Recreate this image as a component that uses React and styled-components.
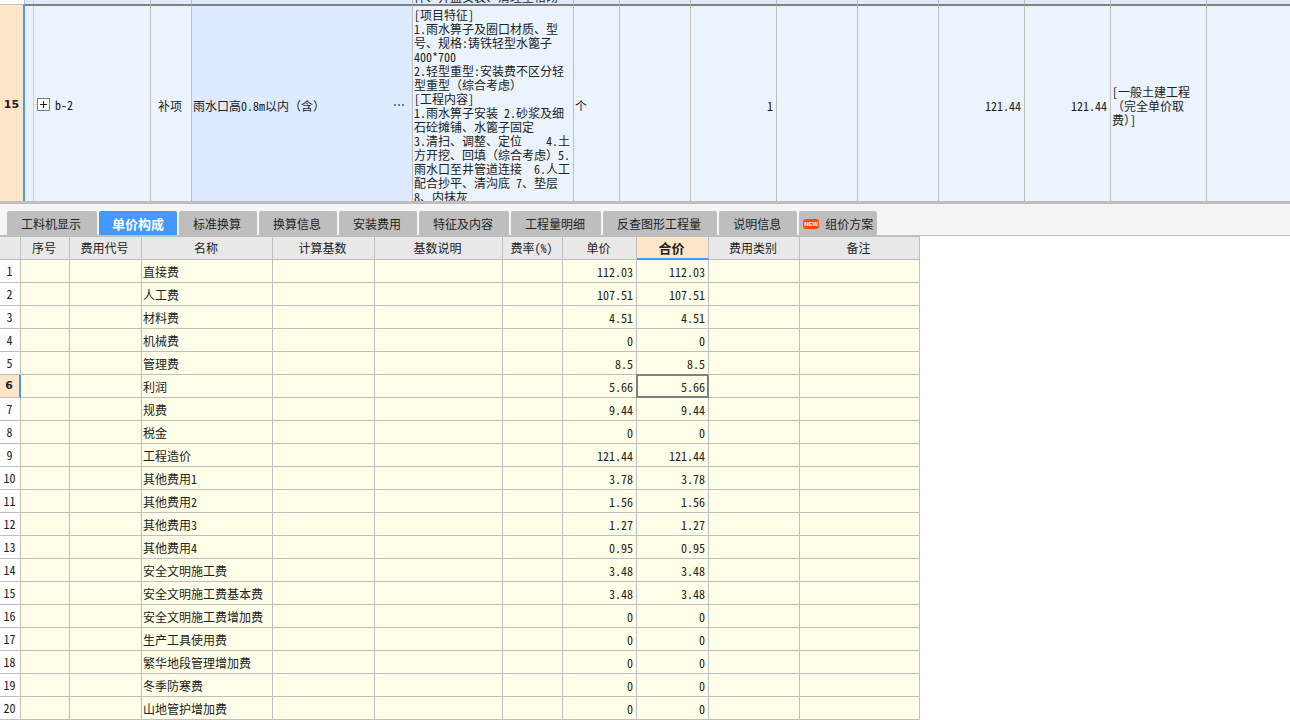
import React from 'react';
import styled, { createGlobalStyle } from 'styled-components';

const GlobalStyle = createGlobalStyle`
  * {
    box-sizing: border-box;
  }

  body {
    margin: 0;
    background: #fff;
    color: #222;
    font-family: "Noto Sans CJK SC", "Liberation Sans", sans-serif;
    font-size: 12px;
    line-height: 14px;
    font-feature-settings: "hwid" 1;
  }
`;

const Page = styled.main`
  display: flex;
  flex-direction: column;
  min-height: 100vh;
`;

const UpperPane = styled.section`
  overflow: hidden;
  border-bottom: 3px solid #bebebe;
`;

const Grid = styled.table`
  border-collapse: separate;
  border-spacing: 0;
  table-layout: fixed;
  width: ${(p) => p.$width || '100%'};
`;

const ItemCell = styled.td`
  height: ${(p) => (p.$peek ? 4 : 197)}px;
  padding: 0;
  border-right: 1px solid #bebebe;
  border-top: ${(p) => (p.$peek ? 'none' : '2px solid #808080')};
  background: ${(p) => (p.$focus || p.$peek ? '#ddeaff' : '#ebf3fd')};
  text-align: ${(p) => p.$align || 'left'};
  vertical-align: middle;

  &:last-child {
    border-right: none;
  }
`;

const ItemNumber = styled.th`
  padding: ${(p) => (p.$peek ? 0 : 4)}px 0 0;
  border-right: ${(p) => (p.$peek ? '1px solid #bebebe' : '2px solid #4499ff')};
  border-top: ${(p) => (p.$peek ? 'none' : '1px solid #bebebe')};
  background: ${(p) => (p.$peek ? '#fff' : '#ffe6c8')};
  font-weight: bold;
  font-family: "DejaVu Sans", sans-serif;
  font-size: 11px;
`;

const CellText = styled.div`
  padding: 4px 3px 0 1px;
  white-space: pre;
`;

const Clip = styled.div`
  height: ${(p) => p.$height}px;
  padding: ${(p) => p.$top || 0}px 0 0 1px;
  overflow: hidden;
  white-space: pre;
`;

const PeekLine = styled(Clip)`
  display: flex;
  align-items: flex-end;
`;

// keeps full-width brackets at a whole em next to the half-width digits
const Wide = styled.span`
  font-feature-settings: normal;
`;

const Tree = styled.div`
  display: flex;
  align-items: center;
  height: ${(p) => p.$height}px;
  margin-left: 8px;
  padding-top: ${(p) => p.$top || 0}px;
  border-left: 1px solid #ffc880;
`;

const Branch = styled.span`
  width: 3px;
  height: 1px;
  background: #ffc880;
`;

const Expander = styled.button`
  display: flex;
  align-items: center;
  justify-content: center;
  width: 13px;
  height: 13px;
  margin-right: 5px;
  padding: 0;
  border: 1px solid #808080;
  background: #fff;
`;

const NameField = styled.div`
  display: flex;
  align-items: center;
  justify-content: space-between;
  padding: 4px 8px 0 1px;
`;

const MoreButton = styled.button`
  display: flex;
  gap: 2px;
  padding: 0 0 2px;
  border: none;
  background: none;

  i {
    width: 2px;
    height: 2px;
    background: #4389cc;
  }
`;

const TabBar = styled.nav`
  display: flex;
  align-items: flex-end;
  gap: 2px;
  height: 32px;
  padding: 0 7px;
  border-bottom: 1px solid #bebebe;
  background: #f5f5f5;
`;

const TabButton = styled.button`
  display: flex;
  align-items: center;
  gap: 6px;
  height: 24px;
  padding: ${(p) => (p.$badge ? '2px 4px 0' : p.$active ? '2px 13px 0' : '2px 16px 0 14px')};
  border: none;
  border-radius: 2px 2px 0 0;
  background: ${(p) => (p.$active ? '#4499ff' : '#bebebe')};
  color: ${(p) => (p.$active ? '#fff' : '#222')};
  font: inherit;
  font-size: ${(p) => (p.$active ? 13 : 12)}px;
  font-weight: ${(p) => (p.$active ? 'bold' : 'normal')};
  white-space: nowrap;
`;

const NewBadge = styled.span`
  width: 16px;
  height: 10px;
  border-radius: 3px;
  background: #ff4a0a;
  color: #fff;
  font: bold 6px/10px "Liberation Sans", sans-serif;
  text-align: center;
`;

const FeeHead = styled.th`
  height: 24px;
  padding: 0 2px 0 0;
  border-top: 1px solid #bebebe;
  border-right: 1px solid #bebebe;
  border-bottom: ${(p) => (p.$active ? '2px solid #4499ff' : '1px solid #bebebe')};
  background: ${(p) => (p.$active ? '#ffe6c8' : '#e8e8e8')};
  font-size: ${(p) => (p.$active ? 13 : 12)}px;
  font-weight: ${(p) => (p.$active ? 'bold' : 'normal')};
`;

const FeeNumber = styled.th`
  height: 23px;
  padding: 0 1px 0 0;
  border-right: ${(p) => (p.$active ? '2px solid #4499ff' : '1px solid #bebebe')};
  border-bottom: 1px solid #bebebe;
  background: ${(p) => (p.$active ? '#ffe6c8' : '#fff')};
  font-family: ${(p) => p.$active && '"DejaVu Sans", sans-serif'};
  font-size: ${(p) => (p.$active ? 11 : 12)}px;
  font-weight: ${(p) => (p.$active ? 'bold' : 'normal')};
`;

const FeeCell = styled.td`
  height: 23px;
  padding: 2px 3px 0 1px;
  border-right: 1px solid ${(p) => (p.$focus ? '#808080' : '#bebebe')};
  border-bottom: 1px solid ${(p) => (p.$focus ? '#808080' : '#bebebe')};
  background: #ffffe9;
  box-shadow: ${(p) => (p.$focus ? 'inset 0 0 0 1px #808080, -1px -1px #808080, -1px 0 #808080' : 'none')};
  text-align: ${(p) => p.$align || 'left'};
  white-space: nowrap;
`;

const itemWidths = [25, 126, 41, 221, 161, 46, 71, 86, 81, 81, 86, 86, 96, null];

const features = `[项目特征]
1.雨水箅子及圈口材质、型
号、规格:铸铁轻型水篦子
400*700
2.轻型重型:安装费不区分轻
型重型（综合考虑）
[工程内容]
1.雨水箅子安装 2.砂浆及细
石砼摊铺、水篦子固定
3.清扫、调整、定位    4.土
方开挖、回填（综合考虑）5.
雨水口至井管道连接  6.人工
配合抄平、清沟底 7、垫层
8、内抹灰`;

const tabs = ['工料机显示', '单价构成', '标准换算', '换算信息', '安装费用', '特征及内容', '工程量明细', '反查图形工程量', '说明信息', '组价方案'];

const feeColumns = [
  ['', 21],
  ['序号', 49],
  ['费用代号', 72],
  ['名称', 131],
  ['计算基数', 102],
  ['基数说明', 128],
  ['费率(%)', 60],
  ['单价', 74],
  ['合价', 72],
  ['费用类别', 91],
  ['备注', 120],
];

const fees = [
  ['直接费', '112.03'],
  ['人工费', '107.51'],
  ['材料费', '4.51'],
  ['机械费', '0'],
  ['管理费', '8.5'],
  ['利润', '5.66'],
  ['规费', '9.44'],
  ['税金', '0'],
  ['工程造价', '121.44'],
  ['其他费用1', '3.78'],
  ['其他费用2', '1.56'],
  ['其他费用3', '1.27'],
  ['其他费用4', '0.95'],
  ['安全文明施工费', '3.48'],
  ['安全文明施工费基本费', '3.48'],
  ['安全文明施工费增加费', '0'],
  ['生产工具使用费', '0'],
  ['繁华地段管理增加费', '0'],
  ['冬季防寒费', '0'],
  ['山地管护增加费', '0'],
];

const activeRow = 5;

const withWide = (text) =>
  text.split(/([（）])/).map((part, i) => (i % 2 ? <Wide key={i}>{part}</Wide> : part));

const ItemTable = () => (
  <UpperPane>
    <Grid>
      <colgroup>
        {itemWidths.map((w, i) => <col key={i} width={w || undefined} />)}
      </colgroup>
      <tbody>
        <tr>
          <ItemNumber $peek />
          <ItemCell $peek><Tree $height={4} /></ItemCell>
          <ItemCell $peek />
          <ItemCell $peek />
          <ItemCell $peek>
            <PeekLine $height={4}>件、井盖安装、清理垒格砌</PeekLine>
          </ItemCell>
          {itemWidths.slice(5).map((w, i) => <ItemCell $peek key={i} />)}
        </tr>
        <tr>
          <ItemNumber scope="row">15</ItemNumber>
          <ItemCell>
            <Tree $height={195} $top={2}>
              <Branch />
              <Expander aria-label="展开">
                <svg width="7" height="7"><path d="M0 3.500h7M3.500 0v7" stroke="#222" /></svg>
              </Expander>
              b-2
            </Tree>
          </ItemCell>
          <ItemCell $align="center"><CellText>补项</CellText></ItemCell>
          <ItemCell $focus>
            <NameField>
              <span>{withWide('雨水口高0.8m以内（含）')}</span>
              <MoreButton aria-label="更多"><i /><i /><i /></MoreButton>
            </NameField>
          </ItemCell>
          <ItemCell>
            <Clip $height={195} $top={2}>{withWide(features)}</Clip>
          </ItemCell>
          <ItemCell><CellText>个</CellText></ItemCell>
          <ItemCell />
          <ItemCell $align="right"><CellText>1</CellText></ItemCell>
          <ItemCell />
          <ItemCell />
          <ItemCell $align="right"><CellText>121.44</CellText></ItemCell>
          <ItemCell $align="right"><CellText>121.44</CellText></ItemCell>
          <ItemCell><CellText>{withWide('[一般土建工程\n（完全单价取\n费）]')}</CellText></ItemCell>
          <ItemCell />
        </tr>
      </tbody>
    </Grid>
  </UpperPane>
);

const FeeTable = () => (
  <Grid $width="920px">
    <colgroup>
      {feeColumns.map(([label, w]) => <col key={label} width={w} />)}
    </colgroup>
    <thead>
      <tr>
        {feeColumns.map(([label]) => (
          <FeeHead key={label} scope="col" $active={label === '合价'}>{label}</FeeHead>
        ))}
      </tr>
    </thead>
    <tbody>
      {fees.map(([name, price], i) => (
        <tr key={name}>
          <FeeNumber scope="row" $active={i === activeRow}>{i + 1}</FeeNumber>
          <FeeCell />
          <FeeCell />
          <FeeCell>{name}</FeeCell>
          <FeeCell />
          <FeeCell />
          <FeeCell />
          <FeeCell $align="right">{price}</FeeCell>
          <FeeCell $align="right" $focus={i === activeRow}>{price}</FeeCell>
          <FeeCell />
          <FeeCell />
        </tr>
      ))}
    </tbody>
  </Grid>
);

const App = () => (
  <Page>
    <GlobalStyle />
    <ItemTable />
    <TabBar>
      {tabs.map((tab) => (
        <TabButton key={tab} $active={tab === '单价构成'} $badge={tab === '组价方案'}>
          {tab === '组价方案' && <NewBadge>NEW</NewBadge>}
          {tab}
        </TabButton>
      ))}
    </TabBar>
    <FeeTable />
  </Page>
);

export default App;
